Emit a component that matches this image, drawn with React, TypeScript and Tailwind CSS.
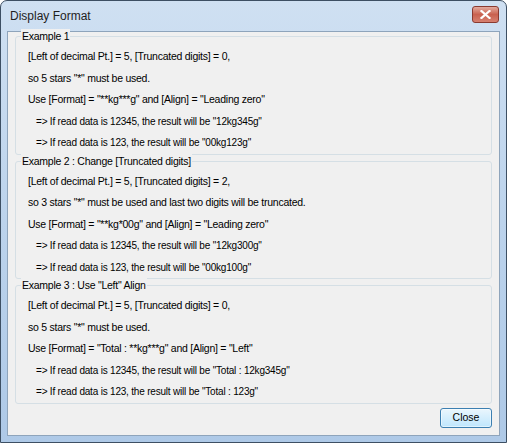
import React from "react";

const Line = ({ children, indent = false }: { children: React.ReactNode; indent?: boolean }) => (
  <div
    className={`h-[21.5px] leading-[21.5px] whitespace-pre ${
      indent ? "pl-[20px] text-[10px] tracking-[-0.2px]" : "pl-[12px] text-[10.5px] tracking-[-0.25px]"
    }`}
  >
    {children}
  </div>
);

const Group = ({ title, lines, top }: { title: string; lines: [string, boolean][]; top: string }) => (
  <div className={`relative border border-[#d5dfe5] rounded-[3px] ${top}`}>
    <div className="absolute left-[5px] -top-[8px] bg-[#f0f0f0] px-[1px] leading-[14px] text-[10.5px] tracking-[-0.25px]">{title}</div>
    <div className="pt-[9px] pb-[0px]">
      {lines.map(([t, ind], i) => (
        <Line key={i} indent={ind}>{t}</Line>
      ))}
    </div>
  </div>
);

export default function App() {
  return (
    <div className="w-[507px] h-[443px] bg-[#ffffff]">
      <div className="w-[507px] h-[443px] rounded-t-[7px] border border-[#3d4f63] bg-gradient-to-b from-[#cfe0f2] via-[#bcd3ec] to-[#aec9e7] flex flex-col font-['Liberation_Sans',sans-serif] text-[11px] text-[#000]">
        <div className="h-[30px] shrink-0 flex items-center justify-between pl-[9px] pr-[7px]">
          <div className="text-[12px] text-[#1e1e1e] pb-[1px]">Display Format</div>
          <div className="w-[27px] h-[17px] mb-[3px] rounded-[3px] border border-[#8a3a30] bg-gradient-to-b from-[#e2aa9e] via-[#c9614f] to-[#d68070] flex items-center justify-center">
            <svg width="11" height="9" viewBox="0 0 11 9">
              <path d="M1.5 1 L9.5 8 M9.5 1 L1.5 8" stroke="#ffffff" strokeWidth="2.2" strokeLinecap="square" />
            </svg>
          </div>
        </div>
        <div className="flex-1 mx-[6px] mb-[6px] bg-[#f0f0f0] border border-[#8ea4bb] flex flex-col px-[7px]">
          <Group
            top="mt-[4px]"
            title="Example 1"
            lines={[
              ["[Left of decimal Pt.] = 5, [Truncated digits] = 0,", false],
              ['so 5 stars "*" must be used.', false],
              ['Use [Format] = "**kg***g" and [Align] = "Leading zero"', false],
              ['=> If read data is 12345, the result will be "12kg345g"', true],
              ['=> If read data is 123, the result will be "00kg123g"', true],
            ]}
          />
          <Group
            top="mt-[6px]"
            title="Example 2 : Change [Truncated digits]"
            lines={[
              ["[Left of decimal Pt.] = 5, [Truncated digits] = 2,", false],
              ['so 3 stars "*" must be used and last two digits will be truncated.', false],
              ['Use [Format] = "**kg*00g" and [Align] = "Leading zero"', false],
              ['=> If read data is 12345, the result will be "12kg300g"', true],
              ['=> If read data is 123, the result will be "00kg100g"', true],
            ]}
          />
          <Group
            top="mt-[6px]"
            title={'Example 3 : Use "Left" Align'}
            lines={[
              ["[Left of decimal Pt.] = 5, [Truncated digits] = 0,", false],
              ['so 5 stars "*" must be used.', false],
              ['Use [Format] = "Total : **kg***g" and [Align] = "Left"', false],
              ['=> If read data is 12345, the result will be "Total : 12kg345g"', true],
              ['=> If read data is 123, the result will be "Total : 123g"', true],
            ]}
          />
          <div className="flex justify-end mt-[4px]">
            <button className="w-[52px] h-[20px] rounded-[3px] border border-[#3c7fb1] bg-gradient-to-b from-[#eaf6fd] to-[#bee6fd] text-[10.5px] text-[#000] shadow-[inset_0_0_0_1px_#ffffff80]">
              Close
            </button>
          </div>
        </div>
      </div>
    </div>
  );
}
